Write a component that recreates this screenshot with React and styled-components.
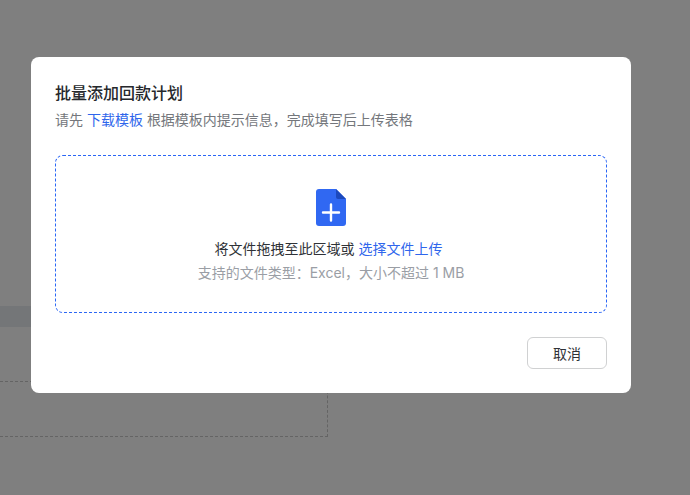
import React from "react";
import styled, { createGlobalStyle } from "styled-components";

const Global = createGlobalStyle`
  html, body { margin: 0; padding: 0; height: 100%; overflow: hidden; background: #fff; }
  #root { height: 100%; }
`;

const Page = styled.div`
  width: 690px;
  height: 495px;
  overflow: hidden;
  background: #fff;
  display: flex;
  flex-direction: column;
  padding-top: 306px;
  box-sizing: border-box;
`;

const TableHead = styled.div`
  width: 328px;
  height: 21px;
  background: #e9ecf0;
`;

const DropArea = styled.div`
  width: 328px;
  height: 56px;
  margin-top: 54px;
  box-sizing: border-box;
  border: 1px dashed #c9c9c9;
  border-left: 0;
`;

const Overlay = styled.div`
  position: fixed;
  inset: 0;
  background: rgba(0, 0, 0, 0.5);
`;

const Modal = styled.div`
  position: fixed;
  left: 31px;
  top: 57px;
  width: 600px;
  height: 336px;
  box-sizing: border-box;
  padding: 24px;
  background: #fff;
  border-radius: 8px;
  font-family: "Inter", "Noto Sans CJK SC", sans-serif;
  display: flex;
  flex-direction: column;
`;

const Title = styled.h2`
  margin: 0;
  font-size: 16px;
  line-height: 24px;
  font-weight: 500;
  color: #26282c;
`;

const Hint = styled.p`
  margin: 4px 0 0;
  font-size: 14px;
  line-height: 22px;
  color: #74777c;
`;

const Link = styled.a`
  color: #2f66ec;
  cursor: pointer;
`;

const Dropzone = styled.div`
  margin-top: 24px;
  height: 158px;
  box-sizing: border-box;
  border: 1px dashed #2a66f5;
  border-radius: 8px;
  display: flex;
  flex-direction: column;
  align-items: center;
  padding-top: 33px;
`;

const FileIcon = styled.svg`
  width: 30px;
  height: 37px;
  display: block;
`;

const DropText = styled.div`
  margin-top: 12px;
  padding-right: 5px;
  font-size: 14px;
  line-height: 22px;
  color: #2f3237;
`;

const DropSub = styled.div`
  margin-top: 2px;
  font-size: 14px;
  line-height: 22px;
  color: #9a9ea5;
`;

const Footer = styled.div`
  margin-top: 24px;
  display: flex;
  justify-content: flex-end;
`;

const Button = styled.button`
  width: 80px;
  height: 32px;
  box-sizing: border-box;
  background: #fff;
  border: 1px solid #d0d1d2;
  border-radius: 6px;
  font: inherit;
  font-size: 14px;
  color: #2f3237;
  padding: 0;
`;

export default function App() {
  return (
    <>
      <Global />
      <Page>
        <TableHead />
        <DropArea />
      </Page>
      <Overlay />
      <Modal>
        <Title>批量添加回款计划</Title>
        <Hint>
          请先 <Link>下载模板</Link> 根据模板内提示信息，完成填写后上传表格
        </Hint>
        <Dropzone>
          <FileIcon viewBox="0 0 30 37">
            <path d="M3 0H20L30 10V34a3 3 0 0 1-3 3H3a3 3 0 0 1-3-3V3a3 3 0 0 1 3-3Z" fill="#3068f2" />
            <path d="M20 0L30 10H22a2 2 0 0 1-2-2Z" fill="#1c49bd" />
            <path d="M15 15.500V31.500M7 23.500H23" stroke="#fff" strokeWidth="2.400" strokeLinecap="round" fill="none" />
          </FileIcon>
          <DropText>
            将文件拖拽至此区域或 <Link>选择文件上传</Link>
          </DropText>
          <DropSub>支持的文件类型：Excel，大小不超过 1 MB</DropSub>
        </Dropzone>
        <Footer>
          <Button>取消</Button>
        </Footer>
      </Modal>
    </>
  );
}
